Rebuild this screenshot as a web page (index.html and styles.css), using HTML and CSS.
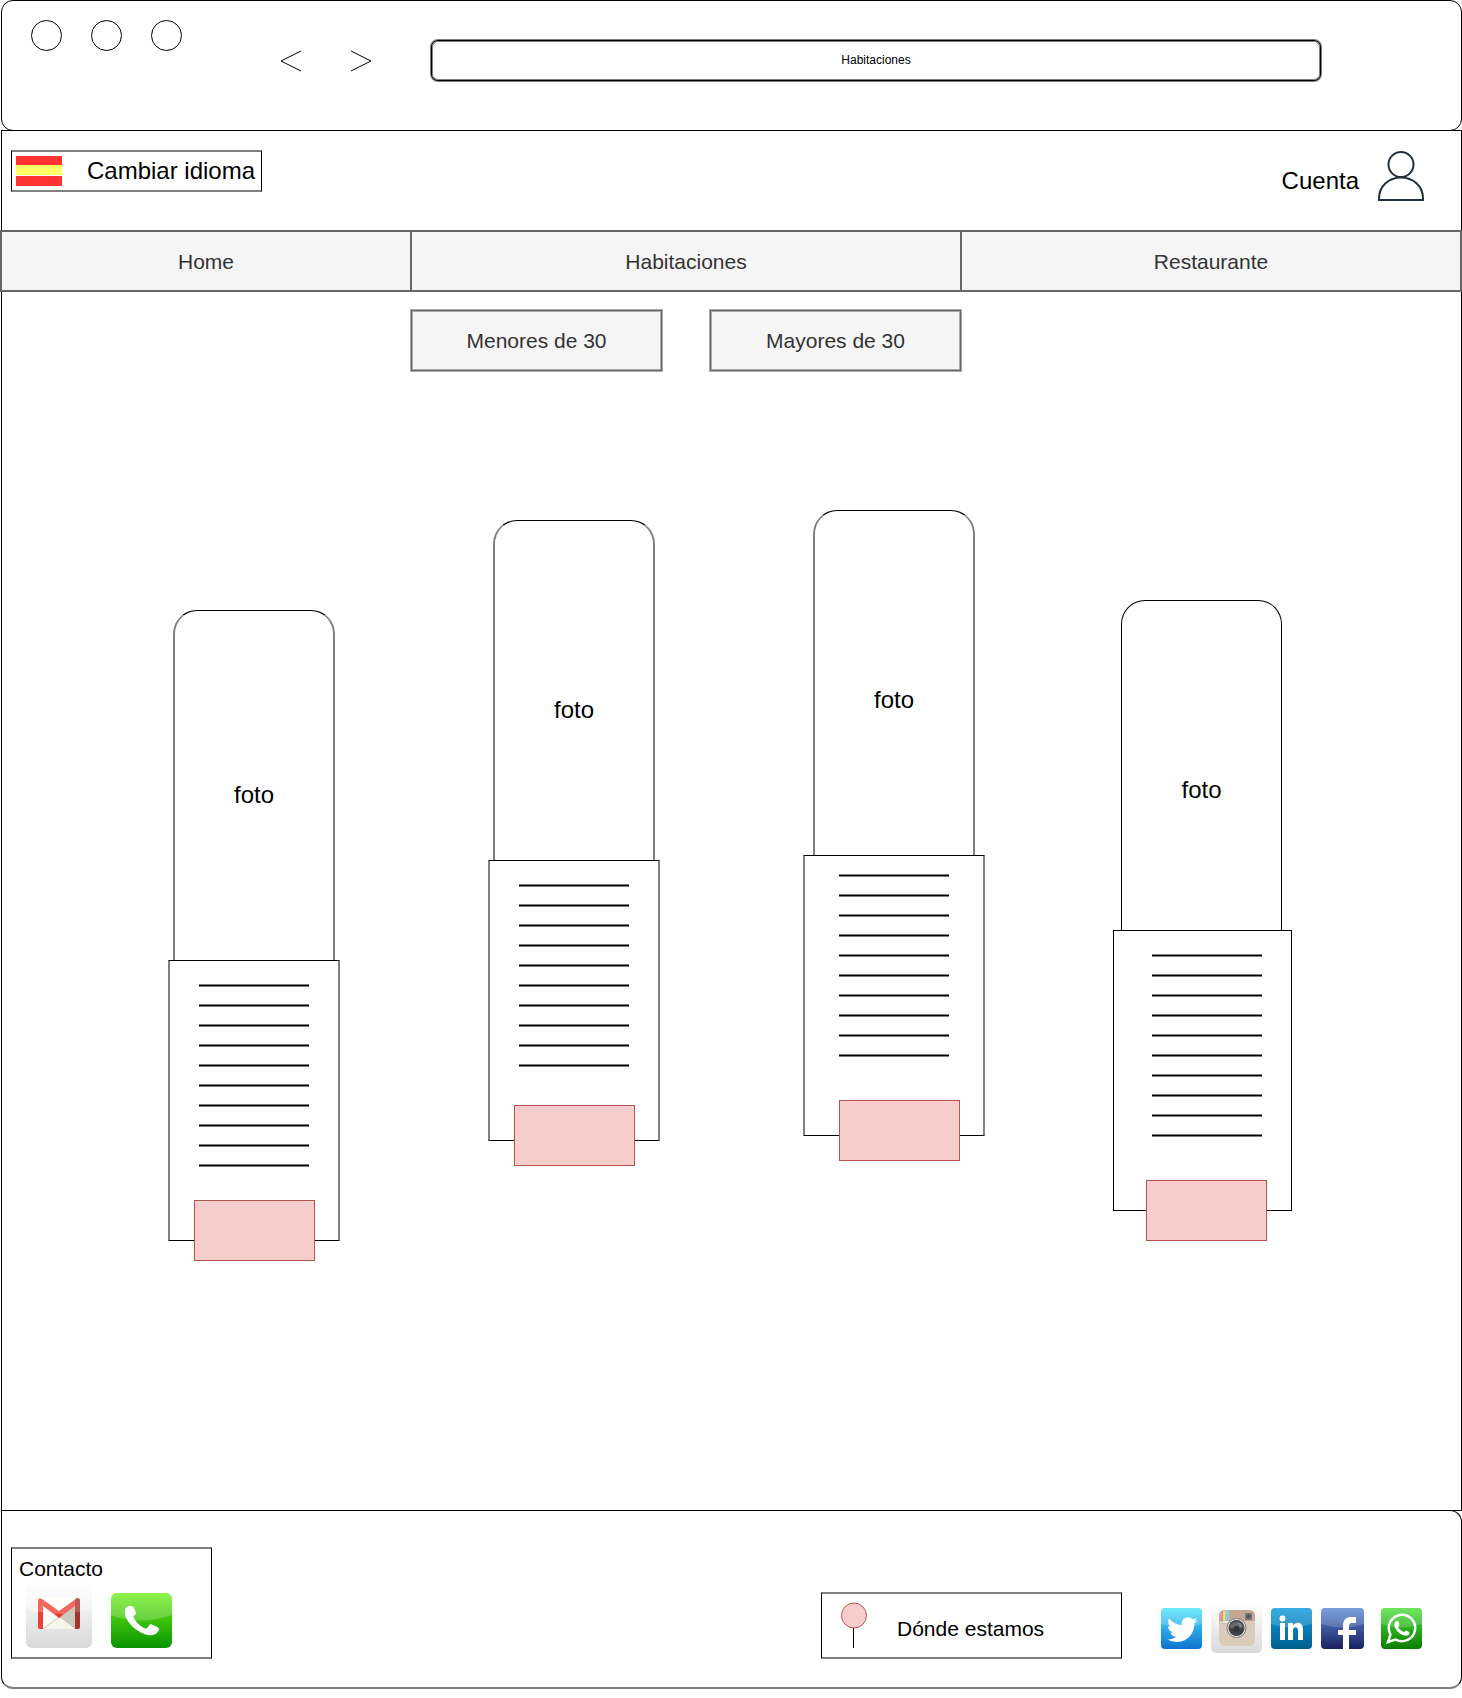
FILE: index.html
```html
<!DOCTYPE html>
<html lang="es">
<head>
<meta charset="utf-8">
<title>Habitaciones</title>
<link rel="stylesheet" href="styles.css">
</head>
<body>
<div class="window">
  <header class="chrome">
    <div class="dots"><span class="dot"></span><span class="dot"></span><span class="dot"></span></div>
    <div class="arrows">
      <button class="arrow" type="button" aria-label="Atrás"><svg width="22" height="22" viewBox="0 0 22 22"><path d="M21 1 1 11 21 21"/></svg></button>
      <button class="arrow" type="button" aria-label="Adelante"><svg width="22" height="22" viewBox="0 0 22 22"><path d="M1 1 21 11 1 21"/></svg></button>
    </div>
    <input class="address" type="text" value="Habitaciones" aria-label="Dirección">
  </header>

  <main class="page">
    <div class="topbar">
      <button class="language" type="button">
        <span class="flag"></span>
        Cambiar idioma
      </button>
      <a class="account" href="#cuenta">
        <span class="account-label">Cuenta</span>
        <svg width="46" height="50" viewBox="0 0 46 50" fill="none" stroke="#232f3e" stroke-width="2"><circle cx="23" cy="13.500" r="12.500"/><path d="M1 49V47.500C1 35 11 26.500 23 26.500S45 35 45 47.500V49Z"/></svg>
      </a>
    </div>

    <nav class="menu">
      <a class="menu-link" href="#home">Home</a>
      <a class="menu-link" href="#habitaciones">Habitaciones</a>
      <a class="menu-link" href="#restaurante">Restaurante</a>
    </nav>

    <div class="filters">
      <div class="filter-group">
        <button class="filter" type="button">Menores de 30</button>
        <button class="filter" type="button">Mayores de 30</button>
      </div>
    </div>

    <section class="gallery">
      <article class="room room-a">
        <div class="photo">foto</div>
        <div class="info"><div class="lines"></div><button class="book" type="button" aria-label="Reservar"></button></div>
      </article>
      <article class="room room-b">
        <div class="photo">foto</div>
        <div class="info"><div class="lines"></div><button class="book" type="button" aria-label="Reservar"></button></div>
      </article>
      <article class="room room-c">
        <div class="photo">foto</div>
        <div class="info"><div class="lines"></div><button class="book" type="button" aria-label="Reservar"></button></div>
      </article>
      <article class="room room-d">
        <div class="photo">foto</div>
        <div class="info"><div class="lines"></div><button class="book" type="button" aria-label="Reservar"></button></div>
      </article>
    </section>
  </main>

  <footer class="footer">
    <section class="contact">
      <h2 class="contact-title">Contacto</h2>
      <div class="contact-icons">
        <a href="#correo" aria-label="Correo">
          <svg width="66" height="67" viewBox="0 0 66 67">
            <defs>
              <linearGradient id="mail-bg" x2="0" y2="1"><stop offset="0" stop-color="#fff"/><stop offset="1" stop-color="#d9d9d9"/></linearGradient>
            </defs>
            <rect width="66" height="67" rx="6" fill="url(#mail-bg)"/>
            <path d="M0 0H66V28Q33 38 0 28Z" fill="#fff" opacity=".4"/>
            <path d="M14 17H52V48H14Z" fill="#fffef8"/>
            <path d="M33 36 49 23V48Z" fill="#c9c9bd"/>
            <path d="M33 36 49 48H17Z" fill="#f7f6ec"/>
            <path d="M33 36 17 48" stroke="#c9c9bd" fill="none"/>
            <path d="M12 20V46Q12 48 14 48H17V25Z" fill="#ea4335"/>
            <path d="M54 20V46Q54 48 52 48H49V23Z" fill="#a8332b"/>
            <path d="M12 20Q12 16 16 18L33 30 50 18L49 25 33 37 17 25V31H12Z" fill="#f2675e"/>
            <path d="M29 33Q33 32 37 33L33 37Z" fill="#e23b2e"/>
            <path d="M49 18Q54 15 54 20V31H49Z" fill="#b95a54"/>
          </svg>
        </a>
        <a href="#telefono" aria-label="Teléfono">
          <svg width="61" height="55" viewBox="0 0 61 55">
            <defs>
              <linearGradient id="phone-bg" x2="0" y2="1"><stop offset="0" stop-color="#6ff01a"/><stop offset="1" stop-color="#089400"/></linearGradient>
            </defs>
            <rect width="61" height="55" rx="6" fill="url(#phone-bg)"/>
            <path d="M0 6Q0 0 6 0H55Q61 0 61 6V22Q30 33 0 22Z" fill="#fff" opacity=".22"/>
            <path d="M17 13.500C20 12.500 22 13 23 15L25 20C25 22 22.500 22 22.500 24C24 28 29 33 33 35C35 36 36.500 35 38 32.500C39 31 40 31 42 32L46 34C48 35 48.500 36 47.500 38C45 42 41 43 37 42C27 40 16 31 14 21C13.500 17 14 14.500 17 13.500Z" fill="#fff"/>
          </svg>
        </a>
      </div>
    </section>

    <a class="location" href="#donde-estamos">
      <svg width="28" height="47" viewBox="0 0 28 47"><path d="M13.500 26V46" stroke="#000"/><circle cx="14" cy="13.500" r="12.500" fill="#f8cecc" stroke="#b85450"/></svg>
      <span class="location-label">Dónde estamos</span>
    </a>

    <div class="social">
      <a href="#twitter" aria-label="Twitter">
        <svg width="41" height="41" viewBox="0 0 41 41">
          <defs><linearGradient id="tw-bg" x2="0" y2="1"><stop offset="0" stop-color="#4fe4fb"/><stop offset="1" stop-color="#0f72cf"/></linearGradient></defs>
          <rect width="41" height="41" rx="4" fill="url(#tw-bg)"/>
          <path d="M0 4Q0 0 4 0H37Q41 0 41 4V16Q20 23 0 16Z" fill="#fff" opacity=".18"/>
          <path transform="translate(6 6.500) scale(1.270)" fill="#fff" d="M23.950 4.570a10 10 0 0 1-2.820.770 4.960 4.960 0 0 0 2.160-2.720c-.950.550-2 .950-3.130 1.180a4.920 4.920 0 0 0-8.380 4.480C7.690 8.090 4.070 6.130 1.640 3.160a4.820 4.820 0 0 0-.670 2.480c0 1.710.870 3.210 2.190 4.100a4.900 4.900 0 0 1-2.230-.620v.060a4.920 4.920 0 0 0 3.950 4.830 5 5 0 0 1-2.210.080 4.940 4.940 0 0 0 4.600 3.420A9.870 9.870 0 0 1 0 19.540a14 14 0 0 0 7.550 2.210c9.050 0 14-7.500 14-13.980 0-.210 0-.420-.020-.630a9.940 9.940 0 0 0 2.460-2.550z"/>
        </svg>
      </a>
      <a href="#instagram" aria-label="Instagram">
        <svg width="51" height="50" viewBox="0 0 51 50">
          <defs><linearGradient id="ig-bg" x2="0" y2="1"><stop offset="0" stop-color="#fff"/><stop offset="1" stop-color="#dadada"/></linearGradient></defs>
          <rect width="51" height="50" rx="5" fill="url(#ig-bg)"/>
          <rect x="8" y="7" width="36" height="36" rx="6" fill="#dacbbb"/>
          <path d="M8 18V13Q8 7 14 7H38Q44 7 44 13V18Z" fill="#c4a795"/>
          <path d="M10 18V9L12 8V18Z" fill="#f48a91"/><path d="M12 8H14V18H12Z" fill="#f9dc77"/><path d="M14 7H16V18H14Z" fill="#9ad8a4"/><path d="M16 7H18V18H16Z" fill="#8cc4ea"/>
          <rect x="11" y="18" width="7" height="2" fill="#fff" stroke="#999" stroke-width=".5"/>
          <rect x="34" y="10" width="7" height="7" rx="1" fill="#777" /><circle cx="37.500" cy="13.500" r="2" fill="#555"/>
          <circle cx="25.500" cy="25" r="9.500" fill="#eee" stroke="#777"/><circle cx="25.500" cy="25" r="8" fill="#3f4043"/>
          <path d="M18 24A8 8 0 0 1 33 24Q25 28 18 24Z" fill="#66686c"/><circle cx="25.500" cy="26" r="3" fill="#333"/><path d="M27 20Q30 21 30 24" fill="none" stroke="#999"/>
        </svg>
      </a>
      <a href="#linkedin" aria-label="LinkedIn">
        <svg width="41" height="41" viewBox="0 0 41 41">
          <defs><linearGradient id="li-bg" x2="0" y2="1"><stop offset="0" stop-color="#0d9ade"/><stop offset="1" stop-color="#005f8e"/></linearGradient></defs>
          <rect width="41" height="41" rx="4" fill="url(#li-bg)"/>
          <path d="M0 4Q0 0 4 0H37Q41 0 41 4V16Q20 23 0 16Z" fill="#fff" opacity=".18"/>
          <g fill="#fff"><circle cx="11.500" cy="10.500" r="3"/><path d="M9 15H14V32H9ZM17 15H22V17.500C25 13 32 14 32 21V32H27V22.500C27 18 22 18 22 22.500V32H17Z"/></g>
        </svg>
      </a>
      <a href="#facebook" aria-label="Facebook">
        <svg width="43" height="41" viewBox="0 0 43 41">
          <defs><linearGradient id="fb-bg" x2="0" y2="1"><stop offset="0" stop-color="#5b89d8"/><stop offset="1" stop-color="#1a2160"/></linearGradient></defs>
          <rect width="43" height="41" rx="4" fill="url(#fb-bg)"/>
          <path d="M0 4Q0 0 4 0H39Q43 0 43 4V16Q21 23 0 16Z" fill="#fff" opacity=".18"/>
          <path d="M22 41V27H17V22H22V18C22 12 25 9 30 9H35V15H31Q28 15 28 18V22H35V27H28V41Z" fill="#fff"/>
        </svg>
      </a>
      <a class="social-last" href="#whatsapp" aria-label="WhatsApp">
        <svg width="41" height="41" viewBox="0 0 41 41">
          <defs><linearGradient id="wa-bg" x2="0" y2="1"><stop offset="0" stop-color="#4ce03c"/><stop offset="1" stop-color="#0c7d00"/></linearGradient></defs>
          <rect width="41" height="41" rx="4" fill="url(#wa-bg)"/>
          <path d="M0 4Q0 0 4 0H37Q41 0 41 4V16Q20 23 0 16Z" fill="#fff" opacity=".18"/>
          <path d="M7 34 9.500 26.500A13.200 13.200 0 1 1 14.500 31.500Z" fill="none" stroke="#fff" stroke-width="2.400"/>
          <path d="M15.500 13C17 12.500 17.500 13.500 18 15C18.500 16.500 19 17 17.500 18.500C17 19 17.500 20 19 21.500C20.500 23 22 23.500 23 24C24 23.500 24 22 25.500 22.500L28 24C29 25 28 27 26.500 27.500C24 28 20 27 17 24C14 21 13 18.500 13.500 16Q14 13.500 15.500 13Z" fill="#fff"/>
        </svg>
      </a>
    </div>
  </footer>
</div>
</body>
</html>
```

FILE: styles.css
```css
* {
  box-sizing: border-box;
}

body {
  margin: 0;
  background: #fff;
  color: #000;
  font-family: "Liberation Sans", Arial, Helvetica, sans-serif;
  font-size: 24px;
  line-height: 28px;
}

a {
  color: inherit;
  text-decoration: none;
}

button,
input {
  padding: 0;
  color: inherit;
  font: inherit;
}

svg {
  display: block;
}

.window {
  margin-left: 1px;
}

/* Browser bar */
.chrome {
  display: flex;
  align-items: flex-start;
  padding: 19px 140px 49px 29px;
  border: 1px solid #000;
  border-radius: 12px;
}

.dots {
  display: flex;
  gap: 29px;
}

.dot {
  width: 31px;
  height: 31px;
  border: 1px solid #000;
  border-radius: 50%;
}

.arrows {
  display: flex;
  gap: 48px;
  margin: 30px 59px 0 98px;
}

.arrow {
  border: 0;
  background: none;
}

.arrow path {
  fill: none;
  stroke: #000;
}

.address {
  flex: 1;
  min-width: 0;
  height: 41px;
  margin-top: 20px;
  padding-bottom: 2px;
  border: 1px solid #000;
  border-radius: 7px;
  box-shadow: 0 0 0 1px #808080, inset 0 0 0 1px #808080;
  font-size: 12px;
  line-height: 16px;
  text-align: center;
}

/* Page */
.page {
  margin-top: -1px;
  border: 1px solid #000;
}

.topbar {
  display: flex;
  align-items: flex-start;
  justify-content: space-between;
  padding: 19px 37px 29px 9px;
}

.language {
  display: flex;
  align-items: center;
  gap: 25px;
  height: 42px;
  padding: 0 6px 0 4px;
  border: solid;
  border-width: 2px 1px;
  border-color: #808080 #000;
  background: #fff;
}

.flag {
  width: 46px;
  height: 30px;
  background: linear-gradient(#f33 0 9px, #ff6 9px 19px, #fff 19px 20px, #f33 20px);
}

.account {
  display: flex;
  align-items: flex-end;
  gap: 19px;
  padding-top: 1px;
}

.account-label {
  padding-bottom: 6px;
}

.menu,
.filters {
  display: grid;
  grid-template-columns: 408fr 550fr 500fr;
  color: #333;
  font-size: 21px;
  line-height: 24px;
}

.menu {
  margin: 0 -1px 0 -2px;
  border: 2px solid #666;
  background: #f5f5f5;
  text-align: center;
}

.menu-link {
  padding: 18px 0 16px;
}

.menu-link + .menu-link {
  border-left: 2px solid #666;
}

.filters {
  margin-right: 1px;
  padding-top: 18px;
}

.filter-group {
  display: flex;
  grid-column: 2;
  justify-content: space-between;
  margin: 0 -1px 0 1px;
}

.filter {
  width: 251px;
  height: 61px;
  border: 1px solid #666;
  background: #f5f5f5;
  box-shadow: 0 0 0 1px #aaa, inset 0 0 0 1px #aaa;
}

/* Rooms */
.gallery {
  display: grid;
  grid-template-columns: 320fr 315fr 310fr 179fr;
  align-items: start;
  padding: 139px 169px 269px 166px;
}

.room {
  --photo: 350px;
  --shift: 19px;
  --top: 23px;
  --gap: 33px;
  --drop: -21px;
  --side: 2px solid #808080;
  width: 172px;
}

.room-a {
  margin-top: 100px;
}

.room-b {
  --photo: 340px;
  --shift: 38px;
  --gap: 38px;
  --drop: -26px;
  margin-top: 10px;
}

.room-c {
  --photo: 345px;
  --shift: 34px;
  --top: 18px;
  --gap: 43px;
  --drop: -26px;
  width: 182px;
}

.room-d {
  --photo: 330px;
  --shift: 49px;
  --gap: 43px;
  --drop: -31px;
  --side: 1px solid #000;
  width: 179px;
  margin-top: 90px;
}

.photo {
  display: flex;
  align-items: center;
  justify-content: center;
  width: 162px;
  height: var(--photo);
  margin: 0 auto;
  padding-top: var(--shift);
  border: var(--side);
  border-top: 1px solid #000;
  border-bottom: 0;
  border-radius: 24px 24px 0 0;
}

.room-d .photo {
  width: 161px;
  margin-left: 8px;
}

.info {
  display: flex;
  flex-direction: column;
  align-items: center;
  padding-top: var(--top);
  border: var(--side);
  border-top: 1px solid #000;
  border-bottom: 1px solid #000;
}

.lines {
  width: 110px;
  height: 183px;
  background: repeating-linear-gradient(#808080 0 1px, #000 1px 2px, #808080 2px 3px, transparent 3px 20px);
}

.book {
  width: 121px;
  height: 61px;
  margin-top: var(--gap);
  margin-bottom: var(--drop);
  border: 1px solid #b85450;
  background: #f8cecc;
}

.room-c .book {
  margin-left: 10px;
}

.room-d .lines,
.room-d .book {
  margin-left: 8px;
}

/* Footer */
.footer {
  display: flex;
  align-items: flex-end;
  gap: 39px;
  margin-top: -1px;
  padding: 36px 39px 28px 9px;
  border: 1px solid #000;
  border-bottom: 2px solid #808080;
  border-radius: 0 12px 12px 12px;
  font-size: 21px;
  line-height: 24px;
}

.contact,
.location {
  border: solid;
  border-width: 2px 1px;
  border-color: #808080 #000;
}

.contact {
  width: 201px;
  margin-right: auto;
  padding: 8px 7px 9px;
}

.contact-title {
  margin: 0;
  font-size: 21px;
  font-weight: 400;
}

.contact-icons {
  display: flex;
  align-items: flex-end;
  gap: 19px;
  padding-left: 7px;
}

.location {
  display: flex;
  align-items: center;
  gap: 29px;
  width: 301px;
  height: 67px;
  padding-left: 18px;
}

.location-label {
  padding-top: 7px;
}

.social {
  display: flex;
  align-items: center;
  gap: 9px;
  margin-bottom: 6px;
}

.social-last {
  margin-left: 8px;
}
```
